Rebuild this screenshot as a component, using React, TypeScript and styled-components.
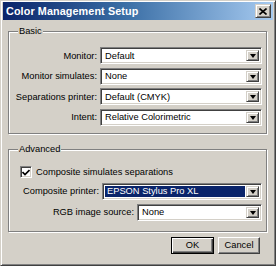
import React from "react";
import styled, { createGlobalStyle, css } from "styled-components";

const GlobalStyle = createGlobalStyle`
  html, body { margin: 0; padding: 0; background: #d4d0c8; }
  body { font-family: "Liberation Sans", Arial, sans-serif; font-size: 9.3px; color: #000; }
  * { box-sizing: border-box; }
`;

const raised = css`
  border: 1px solid;
  border-color: #d4d0c8 #404040 #404040 #d4d0c8;
  box-shadow: inset 1px 1px 0 #fff, inset -1px -1px 0 #808080;
  background: #d4d0c8;
`;

const sunken = css`
  border: 1px solid;
  border-color: #808080 #fff #fff #808080;
  box-shadow: inset 1px 1px 0 #404040, inset -1px -1px 0 #d4d0c8;
`;

const Window = styled.div`
  width: 276px;
  height: 266px;
  background: #d4d0c8;
  border: 1px solid;
  border-color: #d4d0c8 #404040 #404040 #d4d0c8;
  box-shadow: inset 1px 1px 0 #fff, inset -1px -1px 0 #808080;
  padding: 1px 2px 2px 2px;
  display: flex;
  flex-direction: column;
`;

const TitleBar = styled.div`
  height: 18px;
  display: flex;
  align-items: center;
  padding: 0 2px 0 3px;
  background: linear-gradient(to right, #0a246a 0%, #3a6ea5 45%, #a6caf0 100%);
  color: #fff;
  font-weight: bold;
  font-size: 10.8px;
  letter-spacing: 0.1px;
`;

const TitleText = styled.span`
  flex: 1;
  white-space: nowrap;
`;

const CloseButton = styled.div`
  ${raised};
  width: 16px;
  height: 14px;
  display: flex;
  align-items: center;
  justify-content: center;
`;

const Body = styled.div`
  flex: 1;
  display: flex;
  flex-direction: column;
  padding: 0 6px 0 5px;
`;

const GroupBox = styled.div<{ $top: number; $pl: number; $pb: number }>`
  margin-top: ${(p) => p.$top}px;
  border: 1px solid #808080;
  box-shadow: 1px 1px 0 #fff, inset 1px 1px 0 #fff;
  padding: 0 4px ${(p) => p.$pb}px ${(p) => p.$pl}px;
  display: flex;
  flex-direction: column;
`;

const GroupTitle = styled.div<{ $left: number }>`
  align-self: flex-start;
  margin: -7px 0 0 ${(p) => p.$left}px;
  height: 13px;
  line-height: 13px;
  padding: 0 1px;
  background: #d4d0c8;
  white-space: nowrap;
`;

const BasicGrid = styled.div`
  margin-top: 9px;
  display: grid;
  grid-template-columns: 1fr 162px;
  column-gap: 3px;
  row-gap: 3.5px;
  align-items: center;
`;

const Label = styled.span`
  text-align: right;
  white-space: nowrap;
`;

const Select = styled.div<{ $width?: number }>`
  ${sunken};
  width: ${(p) => (p.$width ? `${p.$width}px` : "auto")};
  height: 17px;
  display: flex;
  align-items: stretch;
  padding: 2px;
  background: #fff;
`;

const SelectValue = styled.div<{ $selected?: boolean }>`
  flex: 1;
  display: flex;
  align-items: center;
  padding-left: 2px;
  margin-right: 1px;
  white-space: nowrap;
  overflow: hidden;
  background: ${(p) => (p.$selected ? "#0a246a" : "transparent")};
  color: ${(p) => (p.$selected ? "#fff" : "#000")};
`;

const ArrowButton = styled.div`
  ${raised};
  width: 13px;
  display: flex;
  align-items: center;
  justify-content: center;
`;

const Arrow = styled.div`
  width: 0;
  height: 0;
  border-left: 3.5px solid transparent;
  border-right: 3.5px solid transparent;
  border-top: 4px solid #000;
  margin-top: 1px;
`;

const CheckRow = styled.div`
  margin-top: 10px;
  display: flex;
  align-items: center;
  gap: 4px;
  height: 13px;
`;

const CheckBox = styled.div`
  ${sunken};
  width: 12px;
  height: 12px;
  background: #fff;
  display: flex;
  align-items: center;
  justify-content: center;
`;

const FieldRow = styled.div<{ $top: number }>`
  margin-top: ${(p) => p.$top}px;
  display: flex;
  justify-content: flex-end;
  align-items: center;
  gap: 3px;
`;

const ButtonRow = styled.div`
  margin-top: 5px;
  display: flex;
  justify-content: flex-end;
  gap: 4px;
  padding-right: 7px;
`;

const Button = styled.div<{ $default?: boolean; $width: number }>`
  width: ${(p) => p.$width}px;
  height: 17px;
  display: flex;
  align-items: center;
  justify-content: center;
  background: #d4d0c8;
  ${(p) =>
    p.$default
      ? css`
          border: 1px solid #000;
          box-shadow: inset 1px 1px 0 #fff, inset -1px -1px 0 #404040,
            inset -2px -2px 0 #808080;
        `
      : css`
          border: 1px solid;
          border-color: #fff #404040 #404040 #fff;
          box-shadow: inset -1px -1px 0 #808080;
        `}
`;

const Dropdown: React.FC<{ value: string; width?: number; selected?: boolean }> = ({
  value,
  width,
  selected,
}) => (
  <Select $width={width}>
    <SelectValue $selected={selected}>{value}</SelectValue>
    <ArrowButton>
      <Arrow />
    </ArrowButton>
  </Select>
);

const basicRows: [string, string][] = [
  ["Monitor:", "Default"],
  ["Monitor simulates:", "None"],
  ["Separations printer:", "Default (CMYK)"],
  ["Intent:", "Relative Colorimetric"],
];

export default function App() {
  return (
    <>
      <GlobalStyle />
      <Window>
        <TitleBar>
          <TitleText>Color Management Setup</TitleText>
          <CloseButton>
            <svg width="8" height="7" viewBox="0 0 8 7">
              <path d="M0.5 0.5 L7.5 6.5 M7.5 0.5 L0.5 6.5" stroke="#000" strokeWidth="1.6" />
            </svg>
          </CloseButton>
        </TitleBar>
        <Body>
          <GroupBox $top={11} $pl={6} $pb={7}>
            <GroupTitle $left={3}>Basic</GroupTitle>
            <BasicGrid>
              {basicRows.map(([label, value]) => (
                <React.Fragment key={label}>
                  <Label>{label}</Label>
                  <Dropdown value={value} />
                </React.Fragment>
              ))}
            </BasicGrid>
          </GroupBox>
          <GroupBox $top={15} $pl={11} $pb={10}>
            <GroupTitle $left={-2}>Advanced</GroupTitle>
            <CheckRow>
              <CheckBox>
                <svg width="8" height="7" viewBox="0 0 8 7">
                  <path d="M0.5 3 L3 5.5 L7.5 1" stroke="#000" strokeWidth="1.7" fill="none" />
                </svg>
              </CheckBox>
              <span>Composite simulates separations</span>
            </CheckRow>
            <FieldRow $top={4}>
              <Label>Composite printer:</Label>
              <Dropdown value="EPSON Stylus Pro XL" width={160} selected />
            </FieldRow>
            <FieldRow $top={4}>
              <Label>RGB image source:</Label>
              <Dropdown value="None" width={125} />
            </FieldRow>
          </GroupBox>
          <ButtonRow>
            <Button $default $width={43}>OK</Button>
            <Button $width={42}>Cancel</Button>
          </ButtonRow>
        </Body>
      </Window>
    </>
  );
}
